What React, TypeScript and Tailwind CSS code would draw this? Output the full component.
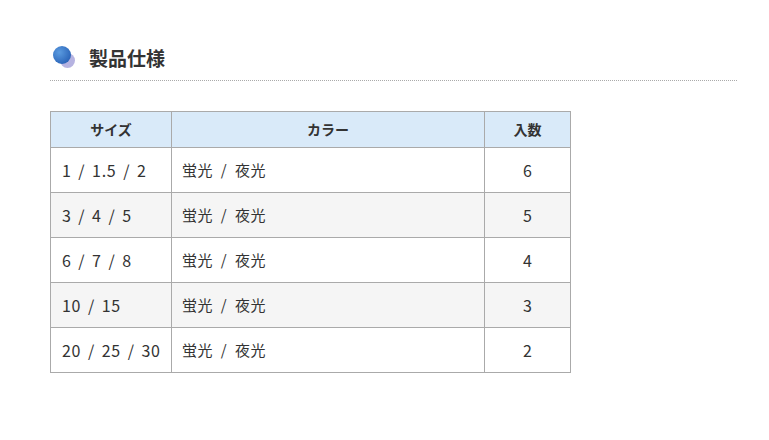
const rows = [
  { size: '1 / 1.5 / 2', color: '蛍光 / 夜光', qty: '6' },
  { size: '3 / 4 / 5', color: '蛍光 / 夜光', qty: '5' },
  { size: '6 / 7 / 8', color: '蛍光 / 夜光', qty: '4' },
  { size: '10 / 15', color: '蛍光 / 夜光', qty: '3' },
  { size: '20 / 25 / 30', color: '蛍光 / 夜光', qty: '2' },
];

function HeadingIcon() {
  return (
    <svg width="24" height="24" viewBox="0 0 24 24" className="shrink-0">
      <defs>
        <radialGradient id="g1" cx="0.35" cy="0.35" r="0.7">
          <stop offset="0%" stopColor="#5b9be0" />
          <stop offset="100%" stopColor="#2a64b8" />
        </radialGradient>
      </defs>
      <circle cx="15.5" cy="15.5" r="7.5" fill="#a9a6dc" opacity="0.85" />
      <circle cx="10" cy="10" r="9" fill="url(#g1)" />
    </svg>
  );
}

export default function App() {
  return (
    <div className="w-[769px] h-[440px] bg-white text-[#333] font-['Noto_Sans_CJK_JP',sans-serif]">
      <div className="pl-[50px] pr-[32px] pt-[42px]">
        <div className="flex items-center gap-[13px] pl-[2px] h-[30px]">
          <HeadingIcon />
          <h2 className="text-[19px] font-bold text-[#333] leading-none">製品仕様</h2>
        </div>
        <div className="mt-[8px] border-b border-dotted border-[#aaa]" />

        <table className="mt-[30px] w-[521px] border-collapse text-[15px]">
          <thead>
            <tr className="bg-[#d9eaf9] h-[36px]">
              <th className="w-[121px] border border-[#aaa] text-[14px] font-bold">サイズ</th>
              <th className="w-[313px] border border-[#aaa] text-[14px] font-bold">カラー</th>
              <th className="border border-[#aaa] text-[14px] font-bold">入数</th>
            </tr>
          </thead>
          <tbody>
            {rows.map((r, i) => (
              <tr key={i} className={`h-[45px] ${i % 2 === 1 ? 'bg-[#f5f5f5]' : 'bg-white'}`}>
                <td className="border border-[#aaa] pl-[11px] pr-[4px] text-[16px] text-[#333] tracking-[0.7px] [word-spacing:2.5px] whitespace-nowrap">{r.size}</td>
                <td className="border border-[#aaa] px-[10px] text-[15px] text-[#333] tracking-[0.5px] [word-spacing:4px]">{r.color}</td>
                <td className="border border-[#aaa] text-center text-[16px] text-[#333]">{r.qty}</td>
              </tr>
            ))}
          </tbody>
        </table>
      </div>
    </div>
  );
}
